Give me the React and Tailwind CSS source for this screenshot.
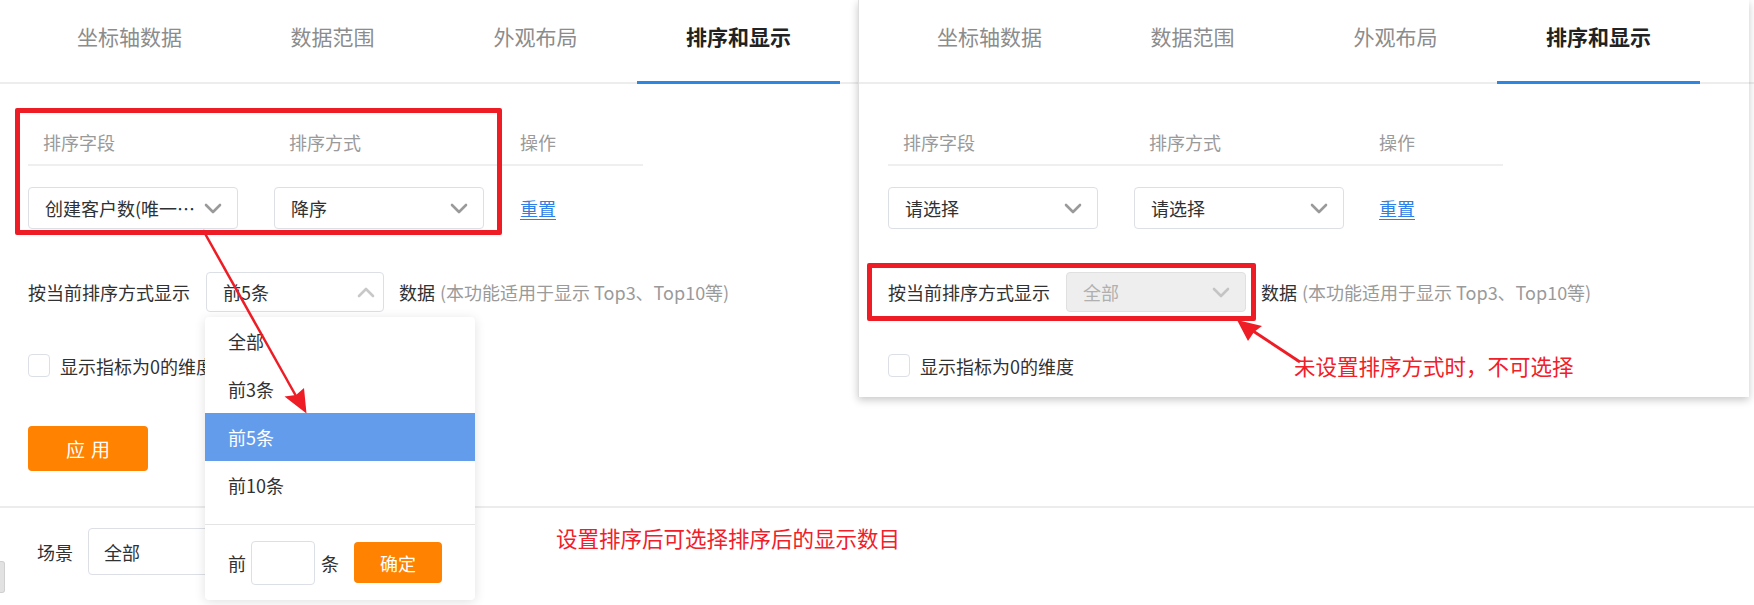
import React from "react";

const tabs = ["坐标轴数据", "数据范围", "外观布局", "排序和显示"];

const Chevron = ({ up = false, color = "#9a9a9a" }) => (
  <svg width="18" height="11" viewBox="0 0 18 11" className="shrink-0">
    <path
      d={up ? "M2 9l7-7 7 7" : "M2 2l7 7 7-7"}
      stroke={color}
      strokeWidth="2.6"
      fill="none"
      strokeLinecap="round"
      strokeLinejoin="round"
    />
  </svg>
);

const Tabs = ({ pad }) => (
  <div className={`flex h-[84px] border-b-2 border-[#ededed] ${pad}`}>
    {tabs.map((t, i) =>
      i === 3 ? (
        <div
          key={t}
          className="w-[203px] h-[84px] border-b-[3px] border-[#2f86e0] flex justify-center pt-[22px] text-[21px] leading-[28px] font-bold text-[#222]"
        >
          {t}
        </div>
      ) : (
        <div
          key={t}
          className="w-[203px] h-[82px] flex justify-center pt-[22px] text-[21px] leading-[28px] text-[#8c8c8c]"
        >
          {t}
        </div>
      )
    )}
  </div>
);

const Select = ({ value, width }) => (
  <div
    className={`${width} h-[42px] border border-[#dcdfe6] rounded-[4px] bg-white flex items-center justify-between pl-[16px] pr-[15px]`}
  >
    <span className="text-[18px] leading-[24px] text-[#303133]">{value}</span>
    <Chevron />
  </div>
);

const SortTable = ({ ml, cols, first, second }) => (
  <div className={`${ml} mt-[37px] w-[615px]`}>
    <div className="flex h-[45px] border-b-2 border-[#efefef] text-[18px] leading-[43px] text-[#9a9a9a]">
      <div className={`${cols[0]} pl-[15px]`}>排序字段</div>
      <div className={`${cols[1]} pl-[15px]`}>排序方式</div>
      <div className={`${cols[2]} pl-[15px]`}>操作</div>
    </div>
    <div className="flex pt-[21px] items-center">
      <div className={cols[0]}>
        <Select value={first} width="w-[210px]" />
      </div>
      <div className={cols[1]}>
        <Select value={second} width="w-[210px]" />
      </div>
      <div className={`${cols[2]} pl-[15px] text-[18px] leading-[24px] text-[#2f7fe6] underline underline-offset-[3px]`}>
        重置
      </div>
    </div>
  </div>
);

const DisplayRow = ({ ml, disabled }) => (
  <div className={`${ml} mt-[43px] h-[40px] flex items-center text-[18px] leading-[24px]`}>
    <span className="text-[#303133] w-[178px] shrink-0">按当前排序方式显示</span>
    {disabled ? (
      <div className="w-[180px] h-[40px] border border-[#e0e0e0] rounded-[4px] bg-[#eeeeee] flex items-center justify-between pl-[16px] pr-[15px]">
        <span className="text-[#b0b0b0]">全部</span>
        <Chevron color="#c4c4c4" />
      </div>
    ) : (
      <div className="w-[178px] h-[40px] border border-[#dcdfe6] rounded-[4px] bg-white flex items-center justify-between pl-[16px] pr-[8px]">
        <span className="text-[#303133]">前5条</span>
        <Chevron up color="#c8c8c8" />
      </div>
    )}
    <span className="ml-[15px] text-[#303133]">数据</span>
    <span className="ml-[5px] text-[#9a9a9a]">(本功能适用于显示 Top3、Top10等)</span>
  </div>
);

const CheckRow = ({ ml }) => (
  <div className={`${ml} mt-[42px] h-[23px] flex items-center`}>
    <div className="w-[22px] h-[23px] border border-[#dcdfe6] rounded-[4px] bg-white" />
    <span className="ml-[10px] text-[18px] leading-[24px] text-[#303133]">显示指标为0的维度</span>
  </div>
);

export default function App() {
  return (
    <div className="relative w-[1754px] h-[605px] bg-white overflow-hidden font-['Noto_Sans_CJK_SC','Noto_Sans',sans-serif]">
      {/* main page */}
      <div className="flex flex-col">
        <Tabs pad="pl-[28px]" />
        <SortTable
          ml="ml-[28px]"
          cols={["w-[246px]", "w-[231px]", "w-[138px]"]}
          first="创建客户数(唯一…"
          second="降序"
        />
        <DisplayRow ml="ml-[28px]" />
        <CheckRow ml="ml-[28px]" />
        <div className="ml-[28px] mt-[49px] w-[120px] h-[45px] rounded-[4px] bg-[#ff8200] flex items-center justify-center text-white text-[19px] leading-[24px] tracking-[6px] pl-[6px]">
          应用
        </div>
        <div className="mt-[35px] h-[2px] w-full bg-[#ececec]" />
        <div className="mt-[20px] h-[47px] flex items-center pl-[37px]">
          <span className="text-[18px] leading-[24px] text-[#303133]">场景</span>
          <div className="ml-[15px] w-[200px] h-[47px] border border-[#dcdfe6] rounded-[4px] flex items-center pl-[15px] text-[18px] leading-[24px] text-[#303133]">
            全部
          </div>
        </div>
      </div>

      {/* small scroll handle at left edge */}
      <div className="absolute left-0 top-[561px] w-[5px] h-[32px] rounded-r-[3px] bg-[#e2e2e2] border border-l-0 border-[#d0d0d0]" />

      {/* second screenshot panel */}
      <div className="absolute left-[858px] top-0 w-[891px] h-[397px] bg-white border-l border-[#dedede] shadow-[0_3px_8px_rgba(0,0,0,0.22)] flex flex-col">
        <Tabs pad="pl-[29px]" />
        <SortTable
          ml="ml-[29px]"
          cols={["w-[246px]", "w-[230px]", "w-[139px]"]}
          first="请选择"
          second="请选择"
        />
        <DisplayRow ml="ml-[29px]" disabled />
        <CheckRow ml="ml-[29px]" />
      </div>

      {/* dropdown */}
      <div className="absolute left-[205px] top-[317px] w-[270px] h-[283px] bg-white rounded-[4px] shadow-[0_2px_12px_rgba(0,0,0,0.12)] flex flex-col">
        <div className="flex flex-col pb-[15px] text-[18px] leading-[24px]">
          <div className="h-[48px] flex items-center pl-[23px] text-[#303133]">全部</div>
          <div className="h-[48px] flex items-center pl-[23px] text-[#303133]">前3条</div>
          <div className="h-[48px] flex items-center pl-[23px] bg-[#649cec] text-white">前5条</div>
          <div className="h-[48px] flex items-center pl-[23px] text-[#303133]">前10条</div>
        </div>
        <div className="flex-1 border-t border-[#e4e4e4] flex items-center pl-[23px] text-[18px] leading-[24px] text-[#303133]">
          <span>前</span>
          <div className="ml-[5px] w-[64px] h-[44px] border border-[#dcdfe6] rounded-[4px]" />
          <span className="ml-[6px]">条</span>
          <div className="ml-[15px] w-[88px] h-[41px] rounded-[4px] bg-[#ff8200] flex items-center justify-center text-white">
            确定
          </div>
        </div>
      </div>

      {/* annotation boxes */}
      <div className="absolute left-[15px] top-[108px] w-[487px] h-[127px] border-[5px] border-[#ee1c25] rounded-[2px]" />
      <div className="absolute left-[867px] top-[263px] w-[389px] h-[58px] border-[5px] border-[#ee1c25] rounded-[2px]" />

      {/* annotation arrows */}
      <svg className="absolute left-0 top-0 pointer-events-none" width="1754" height="605">
        <line x1="203" y1="230" x2="296" y2="396" stroke="#ee1c25" strokeWidth="2.5" />
        <polygon points="306.5,413.5 284.5,396.5 296,395 304,388" fill="#ee1c25" />
        <line x1="1300" y1="362" x2="1250" y2="329" stroke="#ee1c25" strokeWidth="3" />
        <polygon points="1237,320 1262,326 1254,332 1248,341" fill="#ee1c25" />
      </svg>

      {/* annotation texts */}
      <div className="absolute left-[556px] top-[523px] text-[21.5px] leading-[30px] text-[#f0202a]">
        设置排序后可选择排序后的显示数目
      </div>
      <div className="absolute left-[1294px] top-[351px] text-[21.5px] leading-[30px] text-[#f0202a]">
        未设置排序方式时，不可选择
      </div>
    </div>
  );
}
